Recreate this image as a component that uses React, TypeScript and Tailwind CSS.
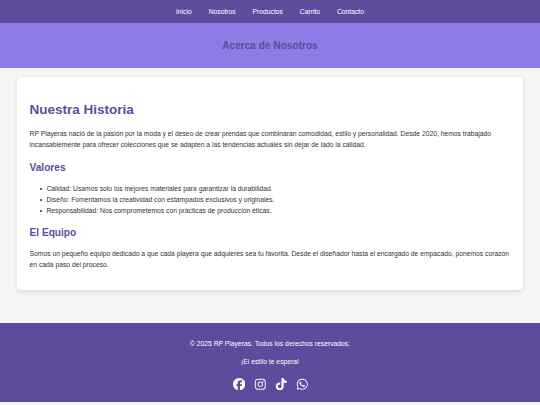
import { FaFacebook, FaInstagram, FaTiktok, FaWhatsapp } from "react-icons/fa6";

const links = ["Inicio", "Nosotros", "Productos", "Carrito", "Contacto"];

const values = [
  "Calidad: Usamos solo los mejores materiales para garantizar la durabilidad.",
  "Diseño: Fomentamos la creatividad con estampados exclusivos y originales.",
  "Responsabilidad: Nos comprometemos con prácticas de producción éticas.",
];

function Heading({ children }: { children: string }) {
  return <h2 className="mt-[8.9px] mb-[7.9px] text-[10.125px] leading-[16.2px] font-bold text-[#5e4b9e]">{children}</h2>;
}

export default function App() {
  return (
    <div className="flex h-[405px] flex-col overflow-hidden bg-[#f5f5f5] font-['Liberation_Sans',Arial,sans-serif] text-[6.75px] leading-[10.8px] text-[#333]">
      <nav className="flex h-[22.8px] shrink-0 items-center justify-center gap-[16.9px] bg-[#5e4b9e] pt-[1px] text-white">
        {links.map((link) => (
          <a key={link} href="#">{link}</a>
        ))}
      </nav>
      <header className="flex h-[45.5px] shrink-0 items-center justify-center bg-[#8e7ce6] pt-[1px]">
        <h2 className="text-[10.125px] leading-[16.2px] font-bold text-[#5e4b9e]">Acerca de Nosotros</h2>
      </header>
      <main className="mx-[16.9px] mt-[8.4px] h-[213.3px] shrink-0 rounded-[4.2px] bg-white px-[12.65px] pt-[22.1px] shadow-[0_1.7px_5px_rgba(0,0,0,0.1)]">
        <h1 className="mb-[9px] text-[13.5px] leading-[21.6px] font-bold text-[#5e4b9e]">Nuestra Historia</h1>
        <p>
          RP Playeras nació de la pasión por la moda y el deseo de crear prendas que combinaran comodidad, estilo y
          personalidad. Desde 2020, hemos trabajado incansablemente para ofrecer colecciones que se adapten a las
          tendencias actuales sin dejar de lado la calidad.
        </p>
        <Heading>Valores</Heading>
        <ul className="pl-[10.3px]">
          {values.map((value) => (
            <li key={value} className="flex items-center gap-[4.6px]">
              <span className="size-[2px] rounded-full bg-[#333]" />
              {value}
            </li>
          ))}
        </ul>
        <Heading>El Equipo</Heading>
        <p>
          Somos un pequeño equipo dedicado a que cada playera que adquieres sea tu favorita. Desde el diseñador hasta el
          encargado de empacado, ponemos corazón en cada paso del proceso.
        </p>
      </main>
      <footer className="mt-[33.4px] flex h-[78.7px] shrink-0 flex-col items-center bg-[#5e4b9e] pt-[15.6px] text-white">
        <p>© 2025 RP Playeras. Todos los derechos reservados.</p>
        <p className="mt-[6.75px]">¡El estilo te espera!</p>
        <div className="mt-[10.2px] flex items-center gap-[8.7px] pl-[1.2px]">
          <FaFacebook className="size-[12.4px]" />
          <FaInstagram className="size-[12.6px]" />
          <FaTiktok className="size-[12.4px]" />
          <FaWhatsapp className="size-[12.6px]" />
        </div>
      </footer>
    </div>
  );
}
